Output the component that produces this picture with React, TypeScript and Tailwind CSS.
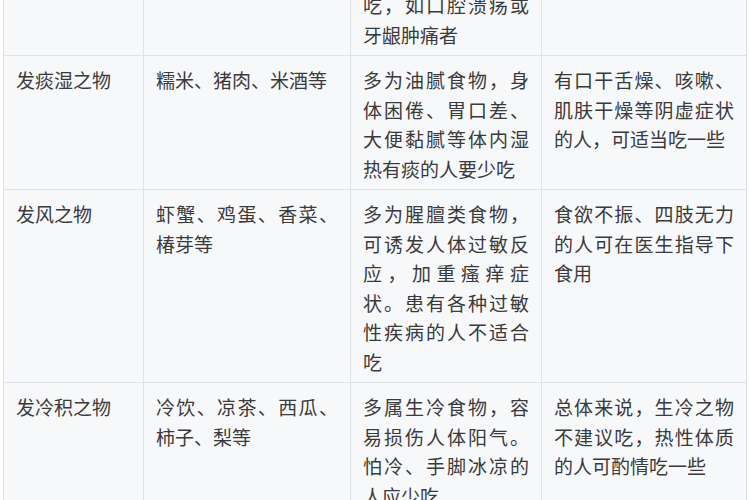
import React from "react";

const rows: [string, string, string, string][] = [
  [
    "发热之物",
    "辣椒、花椒、羊肉、狗肉等",
    "多属辛热食物，阴虚内热的人不宜多吃，如口腔溃疡或牙龈肿痛者",
    "",
  ],
  [
    "发痰湿之物",
    "糯米、猪肉、米酒等",
    "多为油腻食物，身体困倦、胃口差、大便黏腻等体内湿热有痰的人要少吃",
    "有口干舌燥、咳嗽、肌肤干燥等阴虚症状的人，可适当吃一些",
  ],
  [
    "发风之物",
    "虾蟹、鸡蛋、香菜、椿芽等",
    "多为腥膻类食物，可诱发人体过敏反应，加重瘙痒症状。患有各种过敏性疾病的人不适合吃",
    "食欲不振、四肢无力的人可在医生指导下食用",
  ],
  [
    "发冷积之物",
    "冷饮、凉茶、西瓜、柿子、梨等",
    "多属生冷食物，容易损伤人体阳气。怕冷、手脚冰凉的人应少吃",
    "总体来说，生冷之物不建议吃，热性体质的人可酌情吃一些",
  ],
];

export default function App() {
  return (
    <div className="w-[750px] h-[500px] overflow-hidden bg-white">
      <table
        className="ml-[3px] -mt-[79px] w-[743px] table-fixed border-collapse text-[19px] leading-[29.5px] text-[#3a3a3a]"
        style={{ fontFamily: '"Noto Sans CJK SC", "Noto Sans", sans-serif' }}
      >
        <colgroup>
          <col className="w-[140px]" />
          <col className="w-[207px]" />
          <col className="w-[191px]" />
          <col className="w-[205px]" />
        </colgroup>
        <tbody>
          {rows.map((r, i) => (
            <tr key={i} className="bg-[#f7f8fa]">
              {r.map((c, j) => (
                <td
                  key={j}
                  className="border border-[#dfe3e9] px-3 pt-[9px] pb-[6px] align-top text-justify break-all"
                >
                  {c}
                </td>
              ))}
            </tr>
          ))}
        </tbody>
      </table>
    </div>
  );
}
